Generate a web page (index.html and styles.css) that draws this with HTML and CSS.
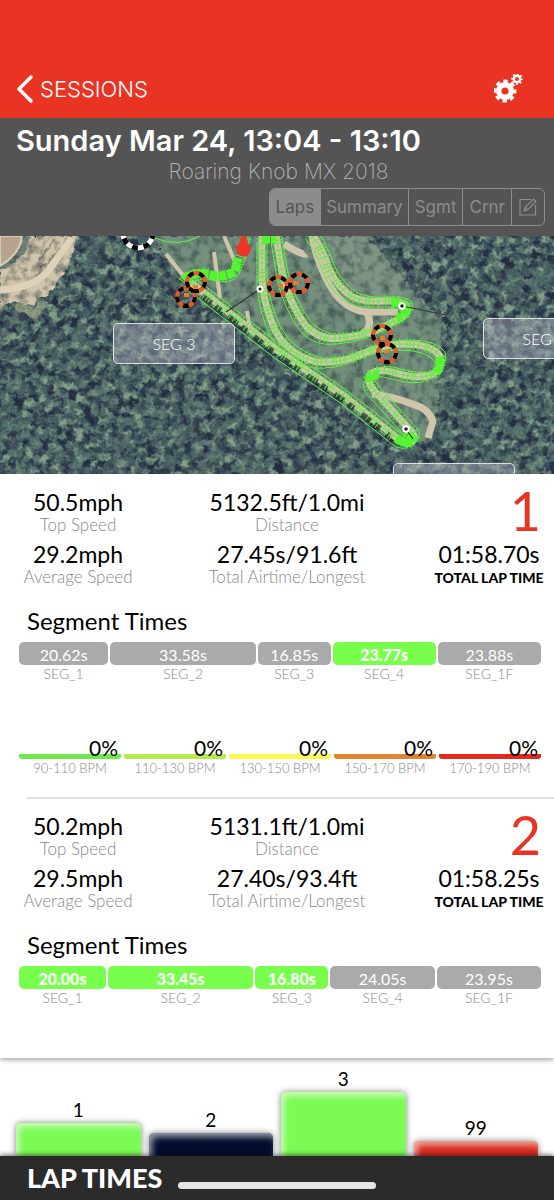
FILE: index.html
```html
<!DOCTYPE html>
<html lang="en">
<head>
    <meta charset="UTF-8">
    <meta name="viewport" content="width=device-width, initial-scale=1.0">
    <title>Sessions - Lap Times</title>
    <link rel="stylesheet" href="styles.css">
</head>
<body>
    <header class="navbar">
        <button type="button" class="back">
            <svg width="18" height="30" viewBox="0 0 18 30"><path d="M15 3 L3 15 L15 27" fill="none" stroke="#fff" stroke-width="3.5" stroke-linecap="round" stroke-linejoin="round"/></svg>
            SESSIONS
        </button>
        <button type="button" class="settings" aria-label="Settings">
            <svg width="30" height="30" viewBox="0 0 30 30" fill="none" stroke="#fff">
                <circle cx="11" cy="17" r="6.3" stroke-width="5.400"/>
                <circle cx="11" cy="17" r="10" stroke-width="3" stroke-dasharray="4.400 3.454" stroke-dashoffset="2"/>
                <circle cx="23" cy="5" r="3.200" stroke-width="2.4"/>
                <circle cx="23" cy="5" r="4.9" stroke-width="1.8" stroke-dasharray="2 1.848" stroke-dashoffset="1"/>
            </svg>
        </button>
    </header>

    <section class="session">
        <h1>Sunday Mar 24, 13:04 - 13:10</h1>
        <p class="track">Roaring Knob MX 2018</p>
        <nav class="tabs">
            <button type="button" class="active">Laps</button>
            <button type="button" class="wide">Summary</button>
            <button type="button">Sgmt</button>
            <button type="button">Crnr</button>
            <button type="button" class="edit" aria-label="Edit">
                <svg width="18" height="18" viewBox="0 0 18 18" fill="none" stroke="#8c8c8c" stroke-width="1.2"><path d="M12 1.5 H1 V17 H16.500 V7"/><path d="M5 13 L6 9.500 L14.500 1 L17 3.500 L8.500 12 Z M6 9.500 L8.500 12"/></svg>
            </button>
        </nav>
    </section>

    <section class="map">
        <svg class="aerial" viewBox="0 0 554 238" preserveAspectRatio="xMidYMid slice">
            <defs>
                <filter id="canopy" x="0" y="0" width="100%" height="100%" color-interpolation-filters="sRGB">
                    <feTurbulence type="fractalNoise" baseFrequency="0.21" numOctaves="3" seed="21" result="warp"/>
                    <feTurbulence type="fractalNoise" baseFrequency="0.117 0.131" numOctaves="5" seed="8" result="leaf"/>
                    <feDisplacementMap in="leaf" in2="warp" scale="10" xChannelSelector="R" yChannelSelector="G"/>
                    <feColorMatrix values="1.5 1.4 0 0 -0.95  1.4 1.5 0 0 -0.95  1.4 1.3 .2 0 -0.95  0 0 0 0 1"/>
                    <feComponentTransfer>
                        <feFuncR type="table" tableValues="0.14 0.20 0.29 0.38 0.52"/>
                        <feFuncG type="table" tableValues="0.18 0.26 0.38 0.49 0.62"/>
                        <feFuncB type="table" tableValues="0.25 0.31 0.39 0.45 0.55"/>
                    </feComponentTransfer>
                </filter>
                <filter id="rough" x="-5%" y="-5%" width="110%" height="110%" color-interpolation-filters="sRGB">
                    <feTurbulence type="fractalNoise" baseFrequency="0.11" numOctaves="4" seed="3" result="n"/>
                    <feDisplacementMap in="SourceGraphic" in2="n" scale="8" xChannelSelector="R" yChannelSelector="G" result="d"/>
                    <feColorMatrix in="n" values="0 0 0 0 0.1  0 0 0 0 0.15  0 0 0 0 0.2  1.2 0 0 0 -0.5" result="shade"/>
                    <feComposite in="shade" in2="d" operator="in" result="s"/>
                    <feMerge><feMergeNode in="d"/><feMergeNode in="s"/></feMerge>
                </filter>
                <path id="straight" d="M190 46 L277 114 L344 160 L392 198 Q402 208 412 206 Q418 200 408 192 L381 162 Q362 144 372 137 Q380 132 396 137 Q420 144 433 138 Q443 131 440 120 Q432 108 404 108 Q385 108 364 117 Q340 128 317 126 Q288 119 275 94 Q264 70 262 44 V0"/>
                <path id="loop" d="M276 0 L282 36 Q288 66 306 90 Q320 105 342 102 Q372 99 397 84 Q412 77 406 69 Q398 64 384 65 Q358 67 347 57 Q332 45 325 22 Q320 8 310 -4"/>
                <path id="hairpin" d="M183 46 Q190 36 206 37 Q228 45 236 32 Q241 22 247 -4"/>
            </defs>

            <g transform="rotate(-24 277 119)">
                <rect x="-60" y="-120" width="680" height="480" filter="url(#canopy)"/>
            </g>

            <!-- cleared ground and dirt -->
            <g filter="url(#rough)">
                <path d="M150 0 L177 36 L190 56 L300 132 L398 206 L426 206 L438 170 L437 130 L442 86 L406 48 L360 0 Z" fill="#74907d"/>
                <path d="M325 0 H366 L406 45 L400 60 L360 60 L340 40 Z" fill="#7f9583"/>
                <path d="M0 0 H78 L68 30 L52 54 L32 68 L14 66 L0 74 Z" fill="#d0c5aa"/>
                <path d="M26 0 L24 14 L0 34" fill="none" stroke="#6d8078" stroke-width="6"/>
                <path d="M40 24 L54 2 M36 40 L60 14" fill="none" stroke="#98947c" stroke-width="2"/>
                <path d="M16 68 L36 78 L44 64" fill="none" stroke="#8d9b80" stroke-width="9"/>
            </g>
            <path d="M0 54 Q34 52 48 35 L72 2" fill="none" stroke="#ddd2b8" stroke-width="7"/>
            <path d="M0 0 H22 Q20 18 0 30 Z" fill="#b8a48c" stroke="#d8ccb4" stroke-width="2"/>

            <g class="dirt">
                <use href="#straight"/>
                <use href="#loop"/>
                <path d="M312 0 Q318 32 334 56 Q348 76 370 76 H398 M284 8 Q304 20 306 18 M367 77 Q374 90 362 98"/>
                <path d="M372 158 Q392 160 412 168 Q428 172 433 185 L428 202"/>
                <path d="M166 18 L190 48 M214 16 L220 62 M224 0 L236 28 M247 75 L250 92" stroke-width="4"/>
            </g>

            <g fill="none" stroke="#252c36" stroke-width="6" stroke-dasharray="12 5 7 9" opacity="0.75">
                <path d="M202 60 L277 119 L344 165 L390 200"/>
            </g>

            <g class="hatch">
                <use href="#straight"/>
                <use href="#loop"/>
                <use href="#hairpin"/>
            </g>
            <g class="trace">
                <use href="#straight"/>
                <use href="#straight" x="-5" y="6"/>
                <use href="#straight" x="5" y="-4"/>
                <use href="#loop"/>
                <use href="#loop" x="-5" y="6"/>
                <use href="#loop" x="5" y="-4"/>
                <use href="#hairpin" x="3" y="6"/>
                <path d="M155 2 Q178 12 200 0"/>
            </g>
            <g class="glow">
                <path d="M184 44 Q191 36 206 38 Q224 43 235 35 L238 22"/>
                <path d="M391 67 Q402 65 407 73 Q405 80 397 83"/>
                <path d="M369 146 Q369 137 379 139"/>
                <path d="M436 137 Q442 129 439 121"/>
                <path d="M396 202 Q409 211 413 203 L405 197"/>
                <path d="M262 3 H276"/>
            </g>

            <g stroke="#30343a" stroke-width="1.2">
                <path d="M260 53 L226 76 M402 70 L446 79 M406 193 L413 203"/>
            </g>
            <g fill="#222" stroke="#fff" stroke-width="2">
                <circle cx="260" cy="53" r="2.500"/>
                <circle cx="402" cy="70" r="2.800"/>
                <circle cx="406" cy="193" r="2.800"/>
            </g>

            <!-- jump markers -->
            <g class="jump-base">
                <circle cx="196" cy="46" r="9"/><circle cx="186" cy="61" r="9"/>
                <circle cx="278" cy="50" r="9"/><circle cx="299" cy="47" r="9"/>
                <circle cx="382" cy="99" r="9"/><circle cx="387" cy="117" r="9"/>
            </g>
            <g class="jump-dash">
                <circle cx="196" cy="46" r="9"/><circle cx="186" cy="61" r="9"/>
                <circle cx="278" cy="50" r="9"/><circle cx="299" cy="47" r="9"/>
                <circle cx="382" cy="99" r="9"/><circle cx="387" cy="117" r="9"/>
            </g>
            <path d="M193 49h5v4h-5z M184 57h5v4h-5z M279 48h4v4h-4z M294 45h5v4h-5z M380 100h5v4h-5z M384 114h5v3h-5z" fill="#f27b20"/>
            <circle cx="138" cy="-3" r="15" fill="none" stroke="#fff" stroke-width="5"/>
            <circle cx="138" cy="-3" r="15" fill="none" stroke="#000" stroke-width="5" stroke-dasharray="5.890"/>
            <path d="M241 0 H246 Q246 4 250 11 A7 7 0 1 1 237 11 Q241 4 241 0" fill="#ee3524"/>
        </svg>
        <span class="tag tag-3">SEG 3</span>
        <span class="tag tag-4">SEG 4</span>
        <span class="tag tag-1"></span>
    </section>

    <main class="laps">
        <article class="lap">
            <div class="stats">
                <div class="stat"><strong>50.5mph</strong><span>Top Speed</span></div>
                <div class="stat"><strong>5132.5ft/1.0mi</strong><span>Distance</span></div>
                <div class="number">1</div>
                <div class="stat"><strong>29.2mph</strong><span>Average Speed</span></div>
                <div class="stat"><strong>27.45s/91.6ft</strong><span>Total Airtime/Longest</span></div>
                <div class="stat total"><strong>01:58.70s</strong><span>TOTAL LAP TIME</span></div>
            </div>
            <h2>Segment Times</h2>
            <div class="segments">
                <div style="flex-grow: 20.62"><b>20.62s</b>SEG_1</div>
                <div style="flex-grow: 33.58"><b>33.58s</b>SEG_2</div>
                <div style="flex-grow: 16.85"><b>16.85s</b>SEG_3</div>
                <div style="flex-grow: 23.77"><b class="best">23.77s</b>SEG_4</div>
                <div style="flex-grow: 23.88"><b>23.88s</b>SEG_1F</div>
            </div>
            <div class="zones">
                <div class="zone z1"><b>0%</b>90-110 BPM</div>
                <div class="zone z2"><b>0%</b>110-130 BPM</div>
                <div class="zone z3"><b>0%</b>130-150 BPM</div>
                <div class="zone z4"><b>0%</b>150-170 BPM</div>
                <div class="zone z5"><b>0%</b>170-190 BPM</div>
            </div>
        </article>
        <article class="lap">
            <div class="stats">
                <div class="stat"><strong>50.2mph</strong><span>Top Speed</span></div>
                <div class="stat"><strong>5131.1ft/1.0mi</strong><span>Distance</span></div>
                <div class="number">2</div>
                <div class="stat"><strong>29.5mph</strong><span>Average Speed</span></div>
                <div class="stat"><strong>27.40s/93.4ft</strong><span>Total Airtime/Longest</span></div>
                <div class="stat total"><strong>01:58.25s</strong><span>TOTAL LAP TIME</span></div>
            </div>
            <h2>Segment Times</h2>
            <div class="segments">
                <div style="flex-grow: 20"><b class="best">20.00s</b>SEG_1</div>
                <div style="flex-grow: 33.45"><b class="best">33.45s</b>SEG_2</div>
                <div style="flex-grow: 16.8"><b class="best">16.80s</b>SEG_3</div>
                <div style="flex-grow: 24.05"><b>24.05s</b>SEG_4</div>
                <div style="flex-grow: 23.95"><b>23.95s</b>SEG_1F</div>
            </div>
        </article>
    </main>

    <section class="chart">
        <div class="column">1<div class="bar green" style="height: 33px"></div></div>
        <div class="column">2<div class="bar navy" style="height: 23px"></div></div>
        <div class="column">3<div class="bar green" style="height: 64px"></div></div>
        <div class="column">99<div class="bar red" style="height: 15px"></div></div>
    </section>
    <footer class="footer">
        LAP TIMES
        <span class="home"></span>
    </footer>
</body>
</html>
```
FILE: styles.css
```css
* {
    box-sizing: border-box;
}
body {
    margin: 0;
    min-height: 100vh;
    display: flex;
    flex-direction: column;
    font-family: Lato, "Open Sans", sans-serif;
    background-color: #fff;
    color: #000;
}
h1, h2, p {
    margin: 0;
}
button {
    border: none;
    padding: 0;
    background: none;
    font-family: inherit;
    cursor: pointer;
}
.navbar {
    display: flex;
    justify-content: space-between;
    align-items: center;
    padding: 60px 30px 0 16px;
    height: 118px;
    background-color: #e93323;
}
.back {
    display: flex;
    align-items: center;
    gap: 6px;
    color: #fff;
    font-family: Inter, sans-serif;
    font-size: 22px;
    font-weight: 300;
}
.settings svg {
    display: block;
}
.session {
    display: flex;
    flex-direction: column;
    padding: 6px 9px 10px 16px;
    background-color: #545454;
    font-family: Inter, sans-serif;
}
.session h1 {
    color: #fff;
    font-size: 29px;
    line-height: 34px;
    font-weight: 600;
}
.track {
    margin-right: 4px;
    text-align: center;
    color: #b4b4b4;
    font-size: 21px;
    line-height: 28px;
    font-weight: 200;
}
.tabs {
    display: flex;
    align-self: flex-end;
    margin-top: 2px;
    border: 1px solid #8c8c8c;
    border-radius: 6px;
    overflow: hidden;
}
.tabs button {
    height: 36px;
    padding: 0 6px;
    border-left: 1px solid #8c8c8c;
    color: #8c8c8c;
    font-size: 17px;
}
.tabs .active {
    border-left: none;
    background-color: #8c8c8c;
    color: #545454;
}
.tabs .wide {
    padding: 0 5px;
}
.tabs .edit {
    padding: 0 7px;
}
.tabs .edit svg {
    display: block;
}
.map {
    position: relative;
    height: 238px;
    overflow: hidden;
}
.aerial {
    display: block;
    width: 100%;
    height: 100%;
}
.dirt {
    fill: none;
    stroke: #cfc5ab;
    stroke-width: 7;
    stroke-linejoin: round;
}
.hatch {
    fill: none;
    stroke: #5be83f;
    stroke-width: 11;
    stroke-dasharray: 1 3 1 2 1 6 1 4;
}
.trace {
    fill: none;
    stroke: #5ff33d;
    stroke-width: 1;
}
.glow {
    fill: none;
    stroke: #53f52f;
    stroke-width: 9;
    stroke-dasharray: 8 1;
}
.jump-base, .jump-dash {
    fill: none;
    stroke: #e2592c;
    stroke-width: 4;
}
.jump-dash {
    stroke: #000;
    stroke-dasharray: 5.655;
}
.tag {
    position: absolute;
    width: 122px;
    height: 41px;
    border: 1px solid #dde1e4;
    border-radius: 5px;
    background-color: rgba(190, 190, 205, 0.4);
    color: #fff;
    font-size: 16px;
    line-height: 39px;
    font-weight: 300;
    text-align: center;
}
.tag-3 {
    left: 113px;
    top: 87px;
}
.tag-4 {
    left: 483px;
    top: 82px;
}
.tag-1 {
    left: 393px;
    top: 227px;
}
.laps {
    position: relative;
    flex: 1;
    padding-bottom: 50px;
    background-color: #fff;
    box-shadow: 0 2px 5px rgba(0, 0, 0, 0.35);
}
.lap {
    padding: 14px 13px 0 19px;
}
.lap + .lap {
    position: relative;
}
/* separator starts at the text inset and runs off the right edge */
.lap + .lap::before {
    content: "";
    position: absolute;
    top: -1px;
    left: 27px;
    right: 0;
    height: 2px;
    background-color: #dedede;
}
.stats {
    display: grid;
    grid-template-columns: 118px 1fr 104px;
    row-gap: 6px;
}
.stat {
    display: flex;
    flex-direction: column;
    align-items: center;
    white-space: nowrap;
}
.stat strong {
    font-size: 23px;
    line-height: 28px;
    font-weight: 400;
}
.stat span {
    color: #888;
    font-size: 17px;
    line-height: 18px;
    font-weight: 300;
}
.stat.total span {
    color: #000;
    font-size: 14px;
    line-height: 20px;
    font-weight: 900;
}
.number {
    color: #e93323;
    font-size: 54px;
    line-height: 46px;
    font-weight: 400;
    text-align: right;
}
h2 {
    margin: 19px 0 7px 8px;
    font-size: 24px;
    line-height: 28px;
    font-weight: 400;
}
.segments {
    display: flex;
    gap: 2px;
}
.segments div {
    flex: 1 1 0;
    text-align: center;
    color: #888;
    font-size: 14px;
    line-height: 18px;
    font-weight: 300;
}
.segments b {
    display: block;
    height: 23px;
    border-radius: 5px;
    background-color: #aaa;
    color: #fff;
    font-size: 16px;
    line-height: 25px;
    font-weight: 400;
}
.segments .best {
    background-color: #78ff4c;
    font-weight: 900;
}
.zones {
    display: flex;
    gap: 3px;
    margin-top: 54px;
    padding-bottom: 21px;
}
.zone {
    flex: 1;
    text-align: center;
    color: #888;
    font-size: 13px;
    line-height: 18px;
    font-weight: 300;
}
.zone b {
    display: block;
    height: 22px;
    padding-right: 3px;
    border-radius: 3px;
    color: #000;
    font-size: 21px;
    line-height: 22px;
    font-weight: 400;
    text-align: right;
}
.z1 b { background: linear-gradient(#6fe84a, #6fe84a) bottom / 100% 5px no-repeat; }
.z2 b { background: linear-gradient(#b7ea4e, #b7ea4e) bottom / 100% 5px no-repeat; }
.z3 b { background: linear-gradient(#fdf951, #fdf951) bottom / 100% 5px no-repeat; }
.z4 b { background: linear-gradient(#e5832f, #e5832f) bottom / 100% 5px no-repeat; }
.z5 b { background: linear-gradient(#df2a1c, #df2a1c) bottom / 100% 5px no-repeat; }
.chart {
    display: flex;
    align-items: flex-end;
    gap: 8px;
    height: 98px;
    padding: 0 16px;
    overflow: hidden;
}
.column {
    flex: 1;
    text-align: center;
    font-size: 19px;
    line-height: 26px;
}
.bar {
    border-radius: 5px 5px 0 0;
    box-shadow: 0 0 6px rgba(0, 0, 0, 0.5), inset 3px 4px 6px rgba(255, 255, 255, 0.6);
}
.green {
    background-color: #7bfb54;
}
.navy {
    background-color: #020d2e;
}
.red {
    background-color: #d92b1f;
}
.footer {
    position: relative;
    height: 44px;
    padding-left: 27px;
    background-color: #2b2b2b;
    box-shadow: 0 -1px 5px rgba(0, 0, 0, 0.6);
    color: #fff;
    font-size: 27px;
    line-height: 44px;
    font-weight: 900;
}
.home {
    position: absolute;
    left: 50%;
    bottom: 11px;
    width: 198px;
    height: 7px;
    margin-left: -99px;
    border-radius: 4px;
    background-color: #e4e4e4;
}
```
